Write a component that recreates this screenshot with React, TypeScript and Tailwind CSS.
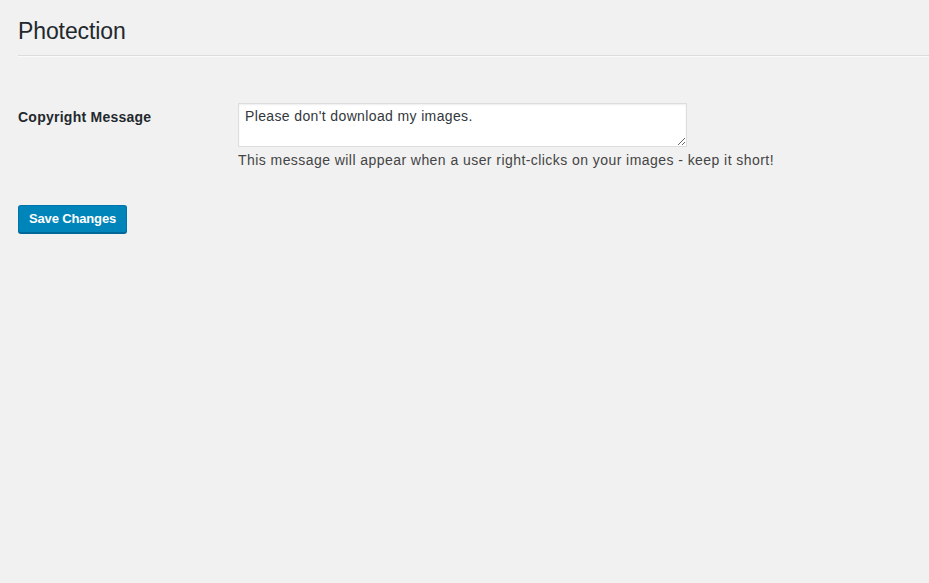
import React from "react";

export default function App() {
  return (
    <div
      className="min-h-[583px] w-full bg-[#f1f1f1] text-[#444] text-[14px]"
      style={{ fontFamily: '"Liberation Sans", Arial, sans-serif' }}
    >
      <div className="pl-[18px]">
        <h1 className="pt-[17px] pb-[9px] text-[23px] leading-[29px] font-normal text-[#23282d] tracking-[-0.1px]">
          Photection
        </h1>
        <div className="border-b border-[#dcdcdc] shadow-[0_1px_0_#fafafa]" />
        <div className="flex pt-[47px]">
          <div className="w-[220px] pt-[5px] text-[14px] font-bold text-[#23282d] leading-[18px] tracking-[0.25px]">
            Copyright Message
          </div>
          <div className="flex flex-col">
            <textarea
              defaultValue="Please don't download my images."
              className="w-[449px] h-[44px] bg-white border border-[#ddd] shadow-[inset_0_1px_2px_rgba(0,0,0,0.07)] px-[6px] py-[2px] text-[14px] leading-[20px] text-[#32373c] tracking-[0.37px] resize-y outline-none"
              style={{ fontFamily: '"Liberation Sans", Arial, sans-serif' }}
            />
            <p className="mt-[4px] text-[14px] leading-[18px] text-[#444] tracking-[0.44px]">
              This message will appear when a user right-clicks on your images - keep it short!
            </p>
          </div>
        </div>
        <div className="pt-[36px]">
          <button className="h-[28px] px-[10px] rounded-[3px] bg-[#0085ba] border border-[#0073aa] border-b-[#006799] shadow-[0_1px_0_#006799] text-white text-[13px] font-bold leading-[26px] tracking-[-0.15px]">
            Save Changes
          </button>
        </div>
      </div>
    </div>
  );
}
